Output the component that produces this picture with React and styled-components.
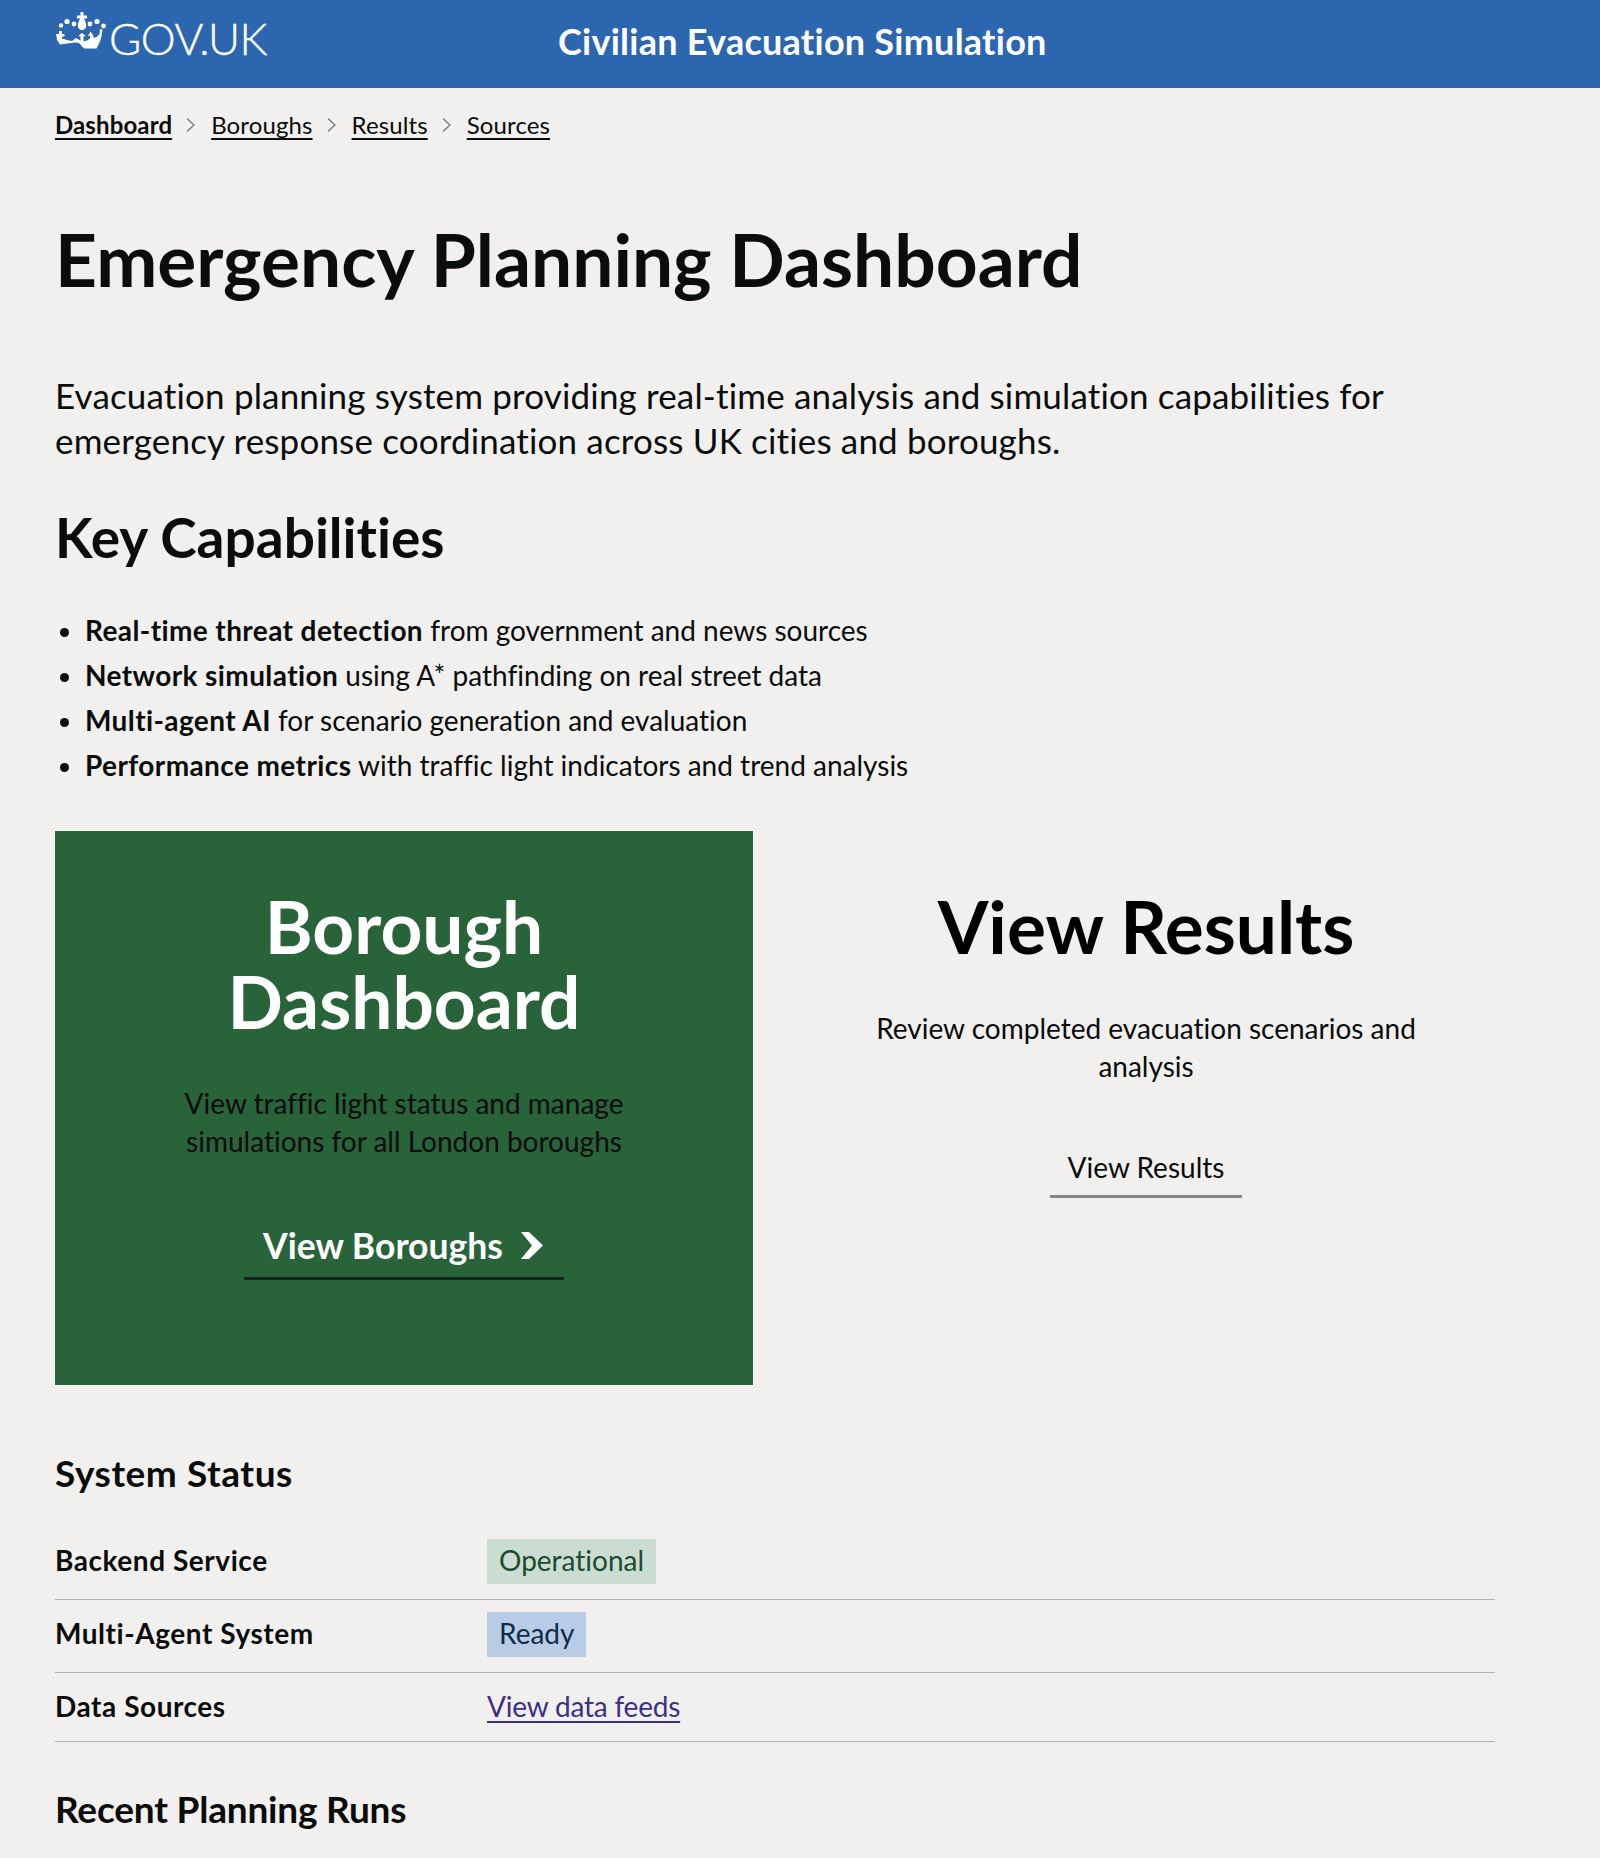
import React from "react";
import styled, { createGlobalStyle } from "styled-components";

const Global = createGlobalStyle`
  html, body { margin: 0; padding: 0; background: #f1f0ee; }
  body { font-family: "Lato", "Noto Sans", Arial, sans-serif; color: #0b0c0c; height: 1858px; overflow: hidden; font-variant-ligatures: none; }
  b { letter-spacing: .4px; }
`;
const Page = styled.div`width: 1600px; height: 1858px; overflow: hidden; background: #f1f0ee;`;
const Header = styled.header`
  height: 88px; background: #2c66ae; color: #fff; display: flex; padding-left: 55px; box-sizing: border-box;
`;
const Logo = styled.div`display: flex; align-items: flex-start; width: 503px; padding-top: 12px;`;
const LogoMark = styled.svg`width: 54px; height: 39px; flex: none;`;
const LogoText = styled.span`font-size: 44px; line-height: 52px; font-weight: 300; letter-spacing: -.5px; -webkit-text-stroke: .4px #fff;`;
const ServiceName = styled.div`font-size: 36px; font-weight: 700; line-height: 83px; letter-spacing: .25px;`;
const Main = styled.main`padding: 0 55px;`;
const Crumbs = styled.nav`display: flex; align-items: center; padding-top: 22px; height: 30px; font-size: 24px; line-height: 30px; letter-spacing: .12px;`;
const Crumb = styled.a`color: #0b0c0c; text-decoration: underline; text-underline-offset: 4px; text-decoration-thickness: 2px; font-weight: ${p => p.$bold ? 700 : 400};`;
const Chevron = styled.svg`width: 39px; height: 14px; flex: none;`;
const Title = styled.h1`font-size: 73px; line-height: 80px; font-weight: 700; margin: 79px 0 0;`;
const Lead = styled.p`font-size: 35px; line-height: 45px; margin: 74px 0 0; max-width: 1400px; letter-spacing: .16px;`;
const H2 = styled.h2`font-size: 55px; line-height: 60px; font-weight: 700; margin: 44px 0 0;`;
const List = styled.ul`margin: 41px 0 0; padding: 0 0 0 30px; font-size: 28px; line-height: 45px;`;
const Cards = styled.div`display: grid; grid-template-columns: 698px 786px; margin-top: 43px;`;
const Card = styled.section`
  height: 554px; box-sizing: border-box; padding: 58px 90px 0; text-align: center; display: flex; flex-direction: column; align-items: center;
  background: ${p => p.$green ? "#28633a" : "transparent"};
  color: ${p => p.$green ? "#fff" : "#000"};
`;
const CardTitle = styled.h3`font-size: 73px; line-height: 75px; font-weight: 700; margin: 0;`;
const CardText = styled.p`font-size: 28px; line-height: 38px; margin: 45px 0 0; color: #0b0c0c;`;
const CardLink = styled.a`
  display: inline-flex; align-items: center; gap: 17px; margin-top: ${p => p.$big ? "54px" : "55px"};
  padding: ${p => p.$big ? "0 21px 1px 19px" : "0 18px 2px"}; height: ${p => p.$big ? "62px" : "53px"};
  box-sizing: content-box;
  border-bottom: 3px solid ${p => p.$big ? "#14251b" : "#858585"};
  font-size: ${p => p.$big ? "35.5px" : "28px"}; font-weight: ${p => p.$big ? 700 : 400};
  color: ${p => p.$big ? "#fff" : "#0b0c0c"};
`;
const Section = styled.h2`font-size: 37px; line-height: 44px; font-weight: 700; margin: ${p => p.$top}px 0 0; letter-spacing: ${p => p.$ls}px;`;
const Table = styled.div`width: 1440px; margin-top: 32px;`;
const Row = styled.div`display: grid; grid-template-columns: 432px 1fr; align-items: center; padding: ${p => p.$last ? "12px 0 11px" : "12px 0 15px"}; border-bottom: 1px solid #b1b4b6; font-size: 28px; line-height: 45px;`;
const RowKey = styled.div`font-weight: 700; letter-spacing: .55px; line-height: 42px; padding-bottom: 3px;`;
const Tag = styled.span`display: inline-block; padding: 0 12px; height: 45px; line-height: 43px; background: ${p => p.$bg}; color: ${p => p.$fg};`;
const TagCell = styled.div`display: flex;`;
const DataLink = styled.a`color: #3d2f86; text-decoration: underline; text-underline-offset: 4px; text-decoration-thickness: 2px; justify-self: start; letter-spacing: -.2px; line-height: 43px; padding-bottom: 2px;`;

const Crown = () => (
  <LogoMark viewBox="0 0 54 39" fill="#fff">
    <path d="M25.5 0h3v3.5H32v3h-3.2c1.6 3 2.4 5 2.4 7.2 0 2.4-1.7 4.3-4.2 4.3s-4.2-1.9-4.2-4.3c0-2.2.8-4.2 2.4-7.2H22v-3h3.5z"/>
    <circle cx="19" cy="12" r="2.4"/><circle cx="12" cy="9.5" r="2.6"/><circle cx="35" cy="12" r="2.4"/><circle cx="42" cy="9.5" r="2.6"/>
    <circle cx="48.5" cy="14" r="2.4"/><circle cx="6" cy="13.5" r="2.2"/>
    <path d="M1 22h3v-3h3v3h2.500v2.500H7v2l5 1.500 5 1 4-3 2.500 1.500 2 1v-4l-2-.5 2-2 1.500-1 1.500 1 2 2-2 .5v5l3.500-1 3-2v-3l-2.500.5 2-2.500 1-2 1.500 2 1.500 2.500v2l3-1 3-3 .5-5 2.500.5-1 7-2 6-3 6H29l-5-5.500-4-.5-15 2-3-4.500z"/>
  </LogoMark>
);
const Arrow = () => <Chevron viewBox="0 0 39 14"><path d="M15 .5l7 6.500-7 6.500" fill="none" stroke="#6f7274" strokeWidth="1.2"/></Chevron>;

export default function App() {
  return (
    <Page>
      <Global />
      <Header>
        <Logo><Crown /><LogoText>GOV.UK</LogoText></Logo>
        <ServiceName>Civilian Evacuation Simulation</ServiceName>
      </Header>
      <Main>
        <Crumbs>
          <Crumb $bold>Dashboard</Crumb><Arrow /><Crumb>Boroughs</Crumb><Arrow /><Crumb>Results</Crumb><Arrow /><Crumb>Sources</Crumb>
        </Crumbs>
        <Title>Emergency Planning Dashboard</Title>
        <Lead>Evacuation planning system providing real-time analysis and simulation capabilities for emergency response coordination across UK cities and boroughs.</Lead>
        <H2>Key Capabilities</H2>
        <List>
          <li><b>Real-time threat detection</b> from government and news sources</li>
          <li><b>Network simulation</b> using A* pathfinding on real street data</li>
          <li><b>Multi-agent AI</b> for scenario generation and evaluation</li>
          <li><b>Performance metrics</b> with traffic light indicators and trend analysis</li>
        </List>
        <Cards>
          <Card $green>
            <CardTitle>Borough Dashboard</CardTitle>
            <CardText>View traffic light status and manage simulations for all London boroughs</CardText>
            <CardLink $big>View Boroughs
              <svg width="23" height="27" viewBox="0 0 23 27" fill="#fff"><path d="M1 0h8l14 13.500L9 27H1l11-13.500z"/></svg>
            </CardLink>
          </Card>
          <Card>
            <CardTitle>View Results</CardTitle>
            <CardText>Review completed evacuation scenarios and analysis</CardText>
            <CardLink>View Results</CardLink>
          </Card>
        </Cards>
        <Section $top={66} $ls={0.55}>System Status</Section>
        <Table>
          <Row><RowKey>Backend Service</RowKey><TagCell><Tag $bg="#cbddd3" $fg="#1d4a2c">Operational</Tag></TagCell></Row>
          <Row><RowKey>Multi-Agent System</RowKey><TagCell><Tag $bg="#b6cde5" $fg="#13294a">Ready</Tag></TagCell></Row>
          <Row $last><RowKey>Data Sources</RowKey><DataLink>View data feeds</DataLink></Row>
        </Table>
        <Section $top={45} $ls={-0.2}>Recent Planning Runs</Section>
      </Main>
    </Page>
  );
}
